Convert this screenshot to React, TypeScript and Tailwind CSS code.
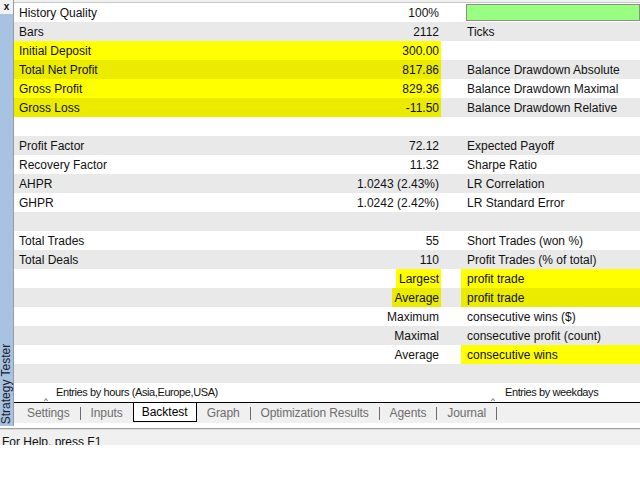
import React from 'react';

type Row = {
  label?: string;
  value?: string;
  right?: string;
  bar?: boolean;
  mark?: boolean; // label + value marked
  markValue?: boolean; // value word marked
  markRight?: boolean; // right text marked
};

const rows: Row[] = [
  { label: 'History Quality', value: '100%', bar: true },
  { label: 'Bars', value: '2112', right: 'Ticks' },
  { label: 'Initial Deposit', value: '300.00', mark: true },
  { label: 'Total Net Profit', value: '817.86', right: 'Balance Drawdown Absolute', mark: true },
  { label: 'Gross Profit', value: '829.36', right: 'Balance Drawdown Maximal', mark: true },
  { label: 'Gross Loss', value: '-11.50', right: 'Balance Drawdown Relative', mark: true },
  {},
  { label: 'Profit Factor', value: '72.12', right: 'Expected Payoff' },
  { label: 'Recovery Factor', value: '11.32', right: 'Sharpe Ratio' },
  { label: 'AHPR', value: '1.0243 (2.43%)', right: 'LR Correlation' },
  { label: 'GHPR', value: '1.0242 (2.42%)', right: 'LR Standard Error' },
  {},
  { label: 'Total Trades', value: '55', right: 'Short Trades (won %)' },
  { label: 'Total Deals', value: '110', right: 'Profit Trades (% of total)' },
  { value: 'Largest', right: 'profit trade', markValue: true, markRight: true },
  { value: 'Average', right: 'profit trade', markValue: true, markRight: true },
  { value: 'Maximum', right: 'consecutive wins ($)' },
  { value: 'Maximal', right: 'consecutive profit (count)' },
  { value: 'Average', right: 'consecutive wins', markRight: true },
  {},
];

const tabs = ['Settings', 'Inputs', 'Backtest', 'Graph', 'Optimization Results', 'Agents', 'Journal'];

const ReportRow = ({ row, index }: { row: Row; index: number }) => {
  const odd = index % 2 === 1;
  const rowBg = odd ? 'bg-[#e9e9e9]' : 'bg-white';
  const yellow = odd ? 'bg-[#ebeb00]' : 'bg-[#ffff00]';

  return (
    <div className={`flex h-[19px] items-center ${rowBg}`}>
      <div className={`flex h-full w-[427px] items-center justify-between ${row.mark ? yellow : ''}`}>
        <span className="pl-[5px]">{row.label}</span>
        {row.markValue ? (
          <span className={`flex h-full items-center pl-[3px] pr-[2px] ${yellow}`}>{row.value}</span>
        ) : (
          <span className="pr-[2px]">{row.value}</span>
        )}
      </div>
      {row.bar ? (
        <div className="ml-[25px] h-[17px] flex-1 border border-[#8c8c8c] bg-[#99ff80]" />
      ) : (
        <div className="flex h-full flex-1 items-center">
          {row.markRight ? (
            <div className={`ml-[20px] flex h-full flex-1 items-center pl-[6px] ${yellow}`}>{row.right}</div>
          ) : (
            <span className="pl-[26px]">{row.right}</span>
          )}
        </div>
      )}
    </div>
  );
};

export default function App() {
  return (
    <div
      className="h-[480px] w-[640px] overflow-hidden bg-white text-[12px] leading-none text-[#111]"
      style={{ fontFamily: '"Liberation Sans", Arial, sans-serif' }}
    >
      <div className="flex h-[426px]">
        {/* side strip */}
        <div className="flex w-[13px] flex-col">
          <div className="flex h-[14px] items-start justify-center bg-[#f2f2f2] pt-[2px] text-[10px] font-bold leading-none">
            x
          </div>
          <div className="flex flex-1 flex-col justify-end bg-[#a7c3e1] pb-[2px]">
            <div className="flex h-[80px] items-center justify-center">
              <span className="block -rotate-90 whitespace-nowrap text-[12px] text-[#1a1a2a]">Strategy Tester</span>
            </div>
          </div>
        </div>
        <div className="w-[1px] bg-[#9a9a9a]" />

        {/* report */}
        <div className="flex flex-1 flex-col">
          <div className="h-[2px] bg-[#f0f0f0]" />
          <div className="h-[1px] bg-[#c8c8c8]" />
          {rows.map((row, i) => (
            <ReportRow key={i} row={row} index={i} />
          ))}
          <div className="relative h-[19px] bg-white">
            <span className="absolute left-[42px] top-[4px] whitespace-nowrap text-[11px] tracking-[-0.4px]">
              Entries by hours (Asia,Europe,USA)
            </span>
            <span className="absolute left-[30px] top-[14px] text-[8px] leading-none">^</span>
            <span className="absolute left-[491px] top-[4px] whitespace-nowrap text-[11px] tracking-[-0.4px]">
              Entries by weekdays
            </span>
            <span className="absolute left-[477px] top-[14px] text-[8px] leading-none">^</span>
          </div>

          {/* tabs */}
          <div className="flex h-[21px] items-start border-t border-black bg-[#f0f0f0] pl-[3px] text-[#6d6d6d]">
            {tabs.map((t, i) => {
              const active = t === 'Backtest';
              const nextActive = tabs[i + 1] === 'Backtest';
              return (
                <React.Fragment key={t}>
                  {active ? (
                    <div className="-mt-[1px] flex h-[20px] items-center border border-black bg-white px-[8px] text-black">
                      {t}
                    </div>
                  ) : (
                    <div className="flex h-[19px] items-center px-[10px] tracking-[-0.1px]">{t}</div>
                  )}
                  {!active && !nextActive && <div className="mt-[4px] h-[13px] w-[1px] bg-[#6d6d6d]" />}
                </React.Fragment>
              );
            })}
          </div>
        </div>
      </div>

      {/* status bar */}
      <div className="h-[2px] bg-white" />
      <div className="h-[1px] bg-[#a0a0a0]" />
      <div className="h-[1px] bg-[#dcdcdc]" />
      <div className="h-[15px] overflow-hidden bg-[#f0f0f0] pl-[2px] pt-[6px] text-[12px] leading-none">
        For Help, press F1
      </div>
    </div>
  );
}
